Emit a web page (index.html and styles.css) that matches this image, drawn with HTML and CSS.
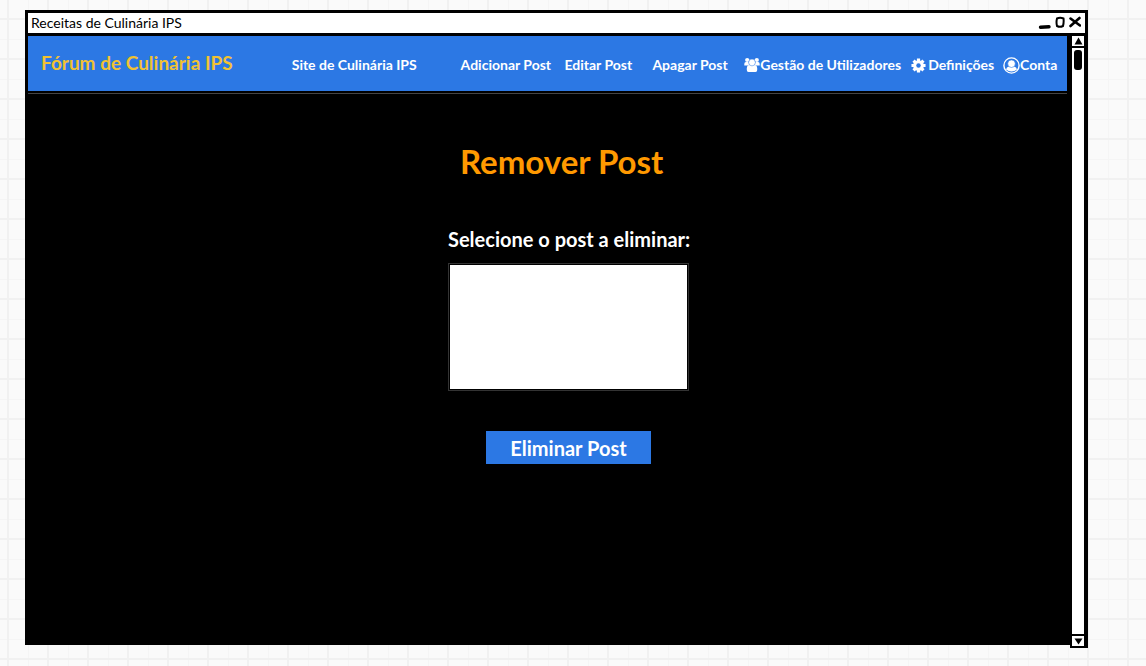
FILE: index.html
```html
<!DOCTYPE html>
<html lang="pt">
<head>
<meta charset="utf-8">
<title>Receitas de Culinária IPS</title>
<link rel="stylesheet" href="styles.css">
</head>
<body>
<div class="window">
  <div class="titlebar">
    <span class="window-title">Receitas de Culinária IPS</span>
    <div class="controls">
      <button type="button" aria-label="Minimizar"><svg width="13" height="14" viewBox="0 0 13 14"><path d="M2.500 11.200L11 10.800" stroke="#000" stroke-width="3.400" stroke-linecap="round"/></svg></button>
      <button type="button" aria-label="Maximizar"><svg width="12" height="14" viewBox="0 0 12 14"><path d="M3 2.500Q6 1 9.500 2.500Q10 6 9 10Q6 11.500 3 10Q2 6 3 2.500Z" fill="none" stroke="#000" stroke-width="2"/></svg></button>
      <button type="button" aria-label="Fechar"><svg width="12" height="14" viewBox="0 0 12 14"><path d="M1.500 2.500L11 9.500M10.500 2L1.500 10" stroke="#000" stroke-width="2.600" stroke-linecap="round"/></svg></button>
    </div>
  </div>
  <div class="viewport">
    <div class="page">
      <nav class="navbar">
        <a class="brand" href="#">Fórum de Culinária IPS</a>
        <a href="#">Site de Culinária IPS</a>
        <a href="#">Adicionar Post</a>
        <a href="#">Editar Post</a>
        <a href="#">Apagar Post</a>
        <a href="#"><svg width="16" height="16" viewBox="0 0 16 16" fill="#fff"><circle cx="3.200" cy="3" r="2.100"/><circle cx="12.800" cy="3" r="2.100"/><path d="M.3 8.500V7Q.3 5 2 5H4.500L5.500 8.500ZM15.700 8.500V7Q15.700 5 14 5H11.500L10.500 8.500Z"/><path d="M2.800 13V11Q2.800 8.500 5 8H11Q13.200 8.500 13.200 11V13Q13.200 15 11.500 15H4.500Q2.800 15 2.800 13Z"/><circle cx="8" cy="5.500" r="3.400" stroke="#2c78e4" stroke-width=".5"/></svg>Gestão de Utilizadores</a>
        <a href="#"><svg class="gear" width="15" height="15" viewBox="0 0 16 16"><g stroke="#fff" stroke-width="3.400"><path d="M8 .5V15.500M.5 8H15.500M2.700 2.700L13.300 13.300M13.300 2.700L2.700 13.300"/></g><circle cx="8" cy="8" r="5.700" fill="#fff"/><circle cx="8" cy="8" r="2.400" fill="#2c78e4"/></svg>Definições</a>
        <a href="#"><svg width="17" height="17" viewBox="0 0 17 17"><circle cx="8.500" cy="8.500" r="7.600" fill="none" stroke="#fff" stroke-width="1.400"/><path d="M3 12.500Q3.500 10 6 9.500H11Q13.500 10 14 12.500Q11.500 14.500 8.500 14.500Q5.500 14.500 3 12.500Z" fill="#fff"/><circle cx="8.500" cy="6.700" r="3.800" fill="#fff" stroke="#2c78e4" stroke-width=".6"/></svg>Conta</a>
      </nav>
      <main class="content">
        <form class="post-form">
          <h1>Remover Post</h1>
          <label for="post">Selecione o post a eliminar:</label>
          <textarea id="post"></textarea>
          <button class="submit" type="button">Eliminar Post</button>
        </form>
      </main>
    </div>
    <div class="scrollbar">
      <button type="button" aria-label="Subir"><svg width="12" height="10" viewBox="0 0 12 10"><path d="M6.500 1.500L10.500 8.500H2.500Z"/></svg></button>
      <div class="track"><div class="thumb"></div></div>
      <button type="button" aria-label="Descer"><svg width="12" height="10" viewBox="0 0 12 10"><path d="M2.500 2.500H10.500L6.500 8.500Z"/></svg></button>
    </div>
  </div>
</div>
</body>
</html>
```
FILE: styles.css
```css
* {
  box-sizing: border-box;
}

body {
  margin: 0;
  min-height: 100vh;
  display: flex;
  padding: 10px 58px 18px 25px;
  font-family: "Lato", sans-serif;
  background-color: #fafafa;
  background-image:
    linear-gradient(90deg, #f1f1f1 2px, transparent 2px),
    linear-gradient(#f1f1f1 2px, transparent 2px),
    linear-gradient(90deg, #f5f5f5 1px, transparent 1px),
    linear-gradient(#f5f5f5 1px, transparent 1px);
  background-size: 40px 40px;
  background-position: 7px 0, 0 18px, 28px 0, 0 39px;
}

button {
  font: inherit;
  border: 0;
  padding: 0;
  background: none;
}

svg {
  display: block;
  flex: none;
}

.window {
  flex: 1;
  display: flex;
  flex-direction: column;
}

.titlebar {
  display: flex;
  align-items: center;
  justify-content: space-between;
  height: 26px;
  padding: 0 4px 0 3px;
  background: #fff;
  border: 3px solid #000;
}

.window-title {
  font-size: 14px;
  line-height: 20px;
}

.controls {
  display: flex;
  gap: 3px;
}

.viewport {
  flex: 1;
  display: flex;
}

.page {
  flex: 1;
  display: flex;
  flex-direction: column;
  margin-bottom: 3px;
  background: #000;
  border: 1px solid #000;
  border-width: 0 3px;
}

.navbar {
  display: grid;
  grid-template-columns: 251fr 169fr 104fr 88fr 92fr 167fr 92fr 64fr;
  align-items: center;
  height: 55px;
  padding-left: 13px;
  background: #2c78e4;
}

.navbar a {
  display: flex;
  align-items: center;
  min-width: 0;
  padding-top: 3px;
  color: #fff;
  font-size: 14px;
  font-weight: 700;
  line-height: 18px;
  text-decoration: none;
  white-space: nowrap;
}

.navbar .brand {
  padding: 0 0 2px;
  color: #f1c232;
  font-size: 19px;
  line-height: 24px;
}

.gear {
  margin-right: 2px;
}

.content {
  flex: 1;
  display: flex;
  justify-content: center;
  padding: 48px 0 48px 51px;
  border-top: 2px solid #000;
  box-shadow: inset 0 1px #444;
}

.post-form {
  display: flex;
  flex-direction: column;
  align-items: flex-start;
  width: 250px;
}

h1 {
  margin: 0;
  padding-left: 12px;
  color: #ff9900;
  font-size: 33px;
  font-weight: 700;
  line-height: 40px;
  white-space: nowrap;
}

label {
  margin-top: 46px;
  color: #fff;
  font-size: 20px;
  font-weight: 700;
  line-height: 24px;
  white-space: nowrap;
}

textarea {
  width: 241px;
  height: 128px;
  margin-top: 12px;
  padding: 6px;
  background: #fff;
  border: 2px solid #000;
  outline: 1px solid #333;
  outline-offset: -1px;
  resize: none;
}

.submit {
  width: 165px;
  height: 33px;
  margin: 40px 0 0 38px;
  color: #fff;
  background: #2c78e4;
  font-size: 20px;
  font-weight: 700;
  line-height: 24px;
}

.scrollbar {
  display: flex;
  flex-direction: column;
  width: 18px;
  background: #fff;
  border: 2px solid #000;
  border-right-width: 4px;
  border-top: 0;
}

.scrollbar button {
  height: 12px;
  border-bottom: 2px solid #000;
}

.track {
  flex: 1;
  padding: 2px;
}

.thumb {
  height: 20px;
  background: #000;
  border-radius: 3px;
}

.track + button {
  border-top: 2px solid #000;
  border-bottom: 0;
}
```
